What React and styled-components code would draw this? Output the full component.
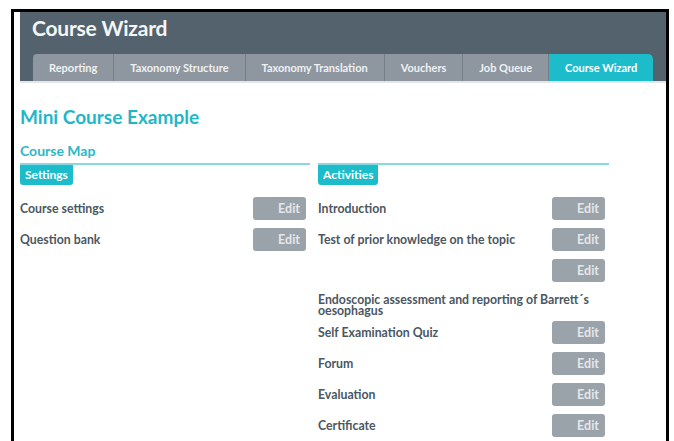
import React from "react";
import styled, { createGlobalStyle } from "styled-components";

const GlobalStyle = createGlobalStyle`
  body {
    margin: 0;
    background: #ffffff;
    font-family: Lato, "Open Sans", sans-serif;
  }
`;

const Frame = styled.div`
  box-sizing: border-box;
  margin: 9px 0 0 11px;
  width: 658px;
  min-height: 432px;
  border: 3px solid #000;
  border-bottom: none;
  background: #fff;
`;

const Header = styled.div`
  margin-left: 6px;
  height: 69px;
  background: #53626d;
  display: flex;
  flex-direction: column;
  justify-content: space-between;
  border-bottom: 2px solid #e2e6e9;
`;

const Title = styled.h1`
  margin: 0;
  padding: 3px 0 0 12px;
  font-size: 21px;
  font-weight: 700;
  color: #f4f6f7;
  letter-spacing: -0.2px;
`;

const Tabs = styled.div`
  display: flex;
  padding-left: 13px;
  height: 27px;
`;

const Tab = styled.div`
  display: flex;
  align-items: center;
  justify-content: center;
  padding: 0 16px;
  height: 27px;
  font-size: 11px;
  font-weight: 700;
  color: ${(p) => (p.active ? "#ffffff" : "#eef1f3")};
  background: ${(p) => (p.active ? "#1dbccb" : "#8e979f")};
  border-left: 1px solid #737e87;
  border-radius: ${(p) => (p.active ? "0 5px 0 0" : p.first ? "4px 0 0 0" : "0")};
  &:first-child {
    border-left: none;
  }
`;

const Content = styled.div`
  padding: 0 6px;
`;

const PageTitle = styled.h2`
  margin: 22px 0 0;
  font-size: 19px;
  font-weight: 700;
  color: #1fb7c8;
`;

const SectionTitle = styled.h3`
  margin: 15px 0 0;
  font-size: 14px;
  font-weight: 700;
  color: #2cb8c8;
  line-height: 16px;
`;

const Columns = styled.div`
  display: grid;
  grid-template-columns: 290px 291px;
  column-gap: 8px;
  margin-top: 4px;
`;

const Column = styled.div`
  display: flex;
  flex-direction: column;
  align-items: stretch;
  border-top: 2px solid #86d9e2;
`;

const Badge = styled.div`
  align-self: flex-start;
  padding: 0 5px;
  height: 20px;
  line-height: 20px;
  font-size: 12px;
  font-weight: 700;
  color: #fff;
  background: #1dbccb;
  border-radius: 0 0 3px 3px;
`;

const List = styled.div`
  margin-top: 8px;
`;

const Row = styled.div`
  display: flex;
  align-items: center;
  justify-content: space-between;
  height: 31px;
  padding-right: 4px;
  font-size: 12.3px;
  font-weight: 700;
  color: #4b5762;
`;

const Group = styled.div`
  padding-top: 8px;
  height: 23px;
  line-height: 11px;
  font-size: 12.3px;
  font-weight: 700;
  color: #4b5762;
`;

const EditButton = styled.button`
  box-sizing: border-box;
  width: 53px;
  height: 23px;
  border: none;
  border-radius: 3px;
  background: #9ba3aa;
  color: #e4e7ea;
  font-family: inherit;
  font-size: 12.5px;
  font-weight: 700;
  text-align: right;
  padding: 0 6px 0 0;
  margin-left: auto;
`;

const tabs = [
  "Reporting",
  "Taxonomy Structure",
  "Taxonomy Translation",
  "Vouchers",
  "Job Queue",
  "Course Wizard",
];

const settings = ["Course settings", "Question bank"];

const activities = [
  { label: "Introduction" },
  { label: "Test of prior knowledge on the topic" },
  { label: "" },
  { group: "Endoscopic assessment and reporting of Barrett´s oesophagus" },
  { label: "Self Examination Quiz" },
  { label: "Forum" },
  { label: "Evaluation" },
  { label: "Certificate" },
];

const App = () => {
  return (
    <>
      <GlobalStyle />
      <Frame>
        <Header>
          <Title>Course Wizard</Title>
          <Tabs>
            {tabs.map((t, i) => (
              <Tab key={t} first={i === 0} active={t === "Course Wizard"}>
                {t}
              </Tab>
            ))}
          </Tabs>
        </Header>
        <Content>
          <PageTitle>Mini Course Example</PageTitle>
          <SectionTitle>Course Map</SectionTitle>
          <Columns>
            <Column>
              <Badge>Settings</Badge>
              <List>
                {settings.map((s) => (
                  <Row key={s}>
                    <span>{s}</span>
                    <EditButton>Edit</EditButton>
                  </Row>
                ))}
              </List>
            </Column>
            <Column>
              <Badge>Activities</Badge>
              <List>
                {activities.map((a, i) =>
                  a.group ? (
                    <Group key={i}>{a.group}</Group>
                  ) : (
                    <Row key={i}>
                      {a.label && <span>{a.label}</span>}
                      <EditButton>Edit</EditButton>
                    </Row>
                  )
                )}
              </List>
            </Column>
          </Columns>
        </Content>
      </Frame>
    </>
  );
};

export default App;
